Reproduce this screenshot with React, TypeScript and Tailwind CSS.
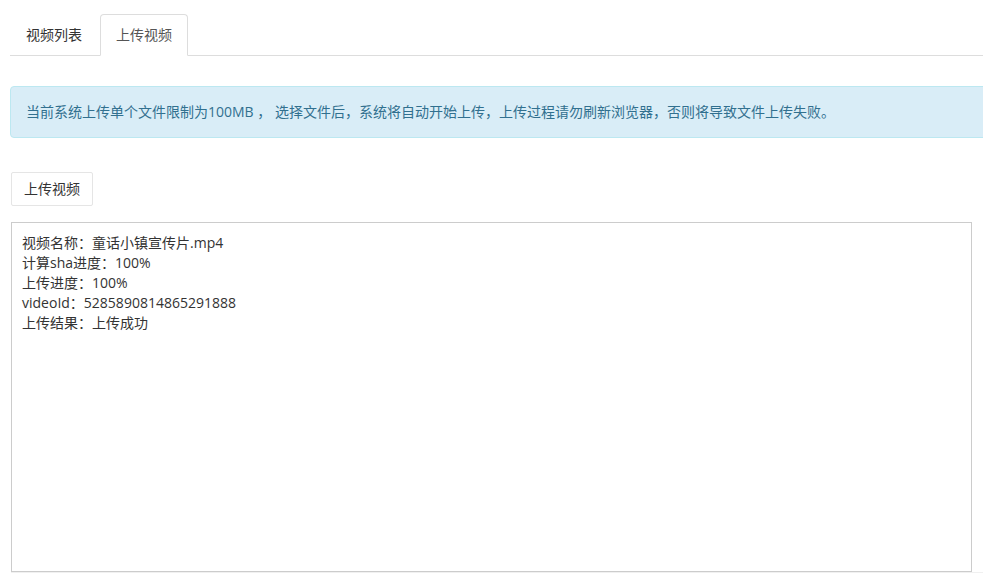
const FONT = { fontFamily: '"Open Sans", "Noto Sans CJK SC", sans-serif' };

const TABS = ["视频列表", "上传视频"];

const LINES = [
  "视频名称：童话小镇宣传片.mp4",
  "计算sha进度：100%",
  "上传进度：100%",
  "videoId：5285890814865291888",
  "上传结果：上传成功",
];

export default function App() {
  const active = 1;

  return (
    <div className="h-[584px] w-[983px] overflow-hidden bg-white text-[14px] leading-[20px] text-[#333]" style={FONT}>
      <div className="pl-[10px] pt-[14px]">
        {/* tabs */}
        <div className="flex border-b border-[#ddd]">
          {TABS.map((tab, idx) => (
            <div
              key={tab}
              className={`-mb-px mr-[2px] rounded-t-[4px] border px-[15px] py-[10px] ${
                idx === active ? "border-[#ddd] border-b-white bg-white text-[#555]" : "border-transparent text-[#333]"
              }`}
            >
              {tab}
            </div>
          ))}
        </div>

        {/* notice */}
        <div className="mt-[30px] -mr-[10px] rounded-[4px] border border-[#bce8f1] bg-[#d9edf7] px-[15px] py-[15px] text-[#31708f]">
          当前系统上传单个文件限制为100MB ， 选择文件后，系统将自动开始上传，上传过程请勿刷新浏览器，否则将导致文件上传失败。
        </div>

        <div className="ml-px mt-[34px] flex">
          <button className="rounded-[2px] border border-[#e5e5e5] bg-white px-[12px] py-[6px] leading-[20px] text-[#333]">
            上传视频
          </button>
        </div>

        <div className="ml-px mt-[16px] h-[350px] w-[961px] border border-[#ccc] px-[10px] py-[10px]">
          {LINES.map((line) => (
            <div key={line}>{line}</div>
          ))}
        </div>
        <div className="ml-px h-px bg-[#f0f0f0]" />
      </div>
    </div>
  );
}
